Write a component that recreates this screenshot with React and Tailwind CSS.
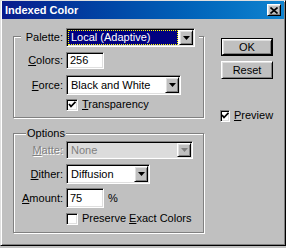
import React from "react";

const raised =
  "border border-t-white border-l-white border-r-black border-b-black shadow-[inset_1px_1px_0_#dfdfdf,inset_-1px_-1px_0_#808080]";
const sunken =
  "border border-t-[#808080] border-l-[#808080] border-r-white border-b-white shadow-[inset_1px_1px_0_#000,inset_-1px_-1px_0_#dfdfdf]";

const Arrow = ({ color = "#000" }) => (
  <svg width="7" height="4" viewBox="0 0 7 4">
    <polygon points="0,0 7,0 3.5,4" fill={color} />
  </svg>
);

const Check = () => (
  <svg width="8" height="7" viewBox="0 0 8 7">
    <path d="M1 3 L3 5.5 L7.5 0.8" stroke="#000" strokeWidth="1.8" fill="none" />
  </svg>
);

const Checkbox = ({ checked }) => (
  <div className={`w-[12px] h-[12px] bg-white flex items-center justify-center ${sunken}`}>
    {checked && <Check />}
  </div>
);

const Select = ({ width, height, children, disabled }) => (
  <div
    className={`flex p-[1px] ${sunken} ${disabled ? "bg-[#dcdcdc]" : "bg-white"}`}
    style={{ width, height }}
  >
    <div className="flex-1 flex items-center min-w-0">{children}</div>
    <div className={`w-[14px] h-full flex items-center justify-center bg-[#c0c0c0] ${raised}`}>
      <Arrow color={disabled ? "#808080" : "#000"} />
    </div>
  </div>
);

const Label = ({ children, gray }) => (
  <div
    className={`w-[52px] shrink-0 text-right pr-[3px] ${
      gray ? "text-[#808080] [text-shadow:1px_1px_0_#fff]" : "text-black"
    }`}
  >
    {children}
  </div>
);

const U = ({ children }) => <span className="underline underline-offset-1">{children}</span>;

const groupBox =
  "border border-[#808080] shadow-[inset_1px_1px_0_#fff,1px_1px_0_#fff] flex flex-col";

export default function App() {
  return (
    <div
      className="w-[286px] h-[248px] bg-[#c0c0c0] text-[11px] leading-none text-black"
      style={{ fontFamily: '"Liberation Sans", Arial, sans-serif' }}
    >
      <div className="h-[246px] flex flex-col border border-t-[#dfdfdf] border-l-[#dfdfdf] border-r-black border-b-black shadow-[inset_1px_1px_0_#fff,inset_-1px_-1px_0_#808080]">
        {/* title bar */}
        <div className="mx-[1px] h-[18px] flex items-center justify-between bg-linear-to-r from-[#0a1a8c] to-[#1084d0] pl-[3px] pr-[3px]">
          <span className="text-white font-bold text-[11px]">Indexed Color</span>
          <div className={`w-[14px] h-[12px] bg-[#c0c0c0] flex items-center justify-center ${raised}`}>
            <svg width="8" height="7" viewBox="0 0 8 7">
              <path d="M0.5 0.5 L7.5 6.5 M7.5 0.5 L0.5 6.5" stroke="#000" strokeWidth="1.6" />
            </svg>
          </div>
        </div>

        <div className="flex pl-[12px]">
          {/* left column */}
          <div className="w-[191px] flex flex-col">
            <div className={`mt-[17px] h-[82px] ${groupBox}`}>
              <div className="-mt-[9px] flex items-center h-[19px]">
                <div className="ml-[7px] w-[45px] h-full bg-[#c0c0c0] flex items-center justify-end pr-[3px]">
                  Palette:
                </div>
                <div className={`flex p-[1px] w-[129px] h-[19px] bg-white ${sunken}`}>
                  <div className="flex-1 flex items-center bg-[#000080] border border-dotted border-[#ffff00] text-white pl-[2px] mr-[1px]">
                    Local (Adaptive)
                  </div>
                  <div className={`w-[14px] h-full flex items-center justify-center bg-[#c0c0c0] ${raised}`}>
                    <Arrow />
                  </div>
                </div>
                <div className="w-[4px] h-full bg-[#c0c0c0]" />
              </div>

              <div className="mt-[5px] flex items-center">
                <Label>
                  <U>C</U>olors:
                </Label>
                <div className={`w-[38px] h-[17px] bg-white flex items-center pl-[3px] ${sunken}`}>256</div>
              </div>

              <div className="mt-[6px] flex items-center">
                <Label>
                  <U>F</U>orce:
                </Label>
                <Select width={115} height={20}>
                  <span className="pl-[3px]">Black and White</span>
                </Select>
              </div>

              <div className="mt-[3px] flex items-center h-[13px] pl-[52px] gap-[4px]">
                <Checkbox checked />
                <span>
                  <U>T</U>ransparency
                </span>
              </div>
            </div>

            <div className={`mt-[15px] h-[100px] ${groupBox}`}>
              <div className="-mt-[7px] ml-[12px] self-start px-[1px] bg-[#c0c0c0] h-[13px] flex items-center">
                Options
              </div>

              <div className="mt-[1px] flex items-center">
                <Label gray>
                  <U>M</U>atte:
                </Label>
                <Select width={127} height={18} disabled>
                  <span className="pl-[3px] text-[#808080]">None</span>
                </Select>
              </div>

              <div className="mt-[5px] flex items-center">
                <Label>
                  <U>D</U>ither:
                </Label>
                <Select width={84} height={20}>
                  <span className="pl-[3px]">Diffusion</span>
                </Select>
              </div>

              <div className="mt-[4px] flex items-center">
                <Label>
                  <U>A</U>mount:
                </Label>
                <div className={`w-[38px] h-[20px] bg-white flex items-center pl-[3px] ${sunken}`}>75</div>
                <span className="ml-[4px]">%</span>
              </div>

              <div className="mt-[4px] flex items-center h-[13px] pl-[52px] gap-[4px]">
                <Checkbox />
                <span>
                  Preserve <U>E</U>xact Colors
                </span>
              </div>
            </div>
          </div>

          {/* right column */}
          <div className="ml-[17px] w-[52px] flex flex-col">
            <div className="mt-[19px] h-[18px] border border-black flex">
              <div className={`flex-1 bg-[#c0c0c0] flex items-center justify-center ${raised}`}>OK</div>
            </div>
            <div className={`mt-[5px] h-[18px] bg-[#c0c0c0] flex items-center justify-center ${raised}`}>
              Reset
            </div>
            <div className="mt-[30px] -ml-[1px] flex items-center h-[13px] gap-[4px]">
              <Checkbox checked />
              <span>
                <U>P</U>review
              </span>
            </div>
          </div>
        </div>
      </div>
    </div>
  );
}
